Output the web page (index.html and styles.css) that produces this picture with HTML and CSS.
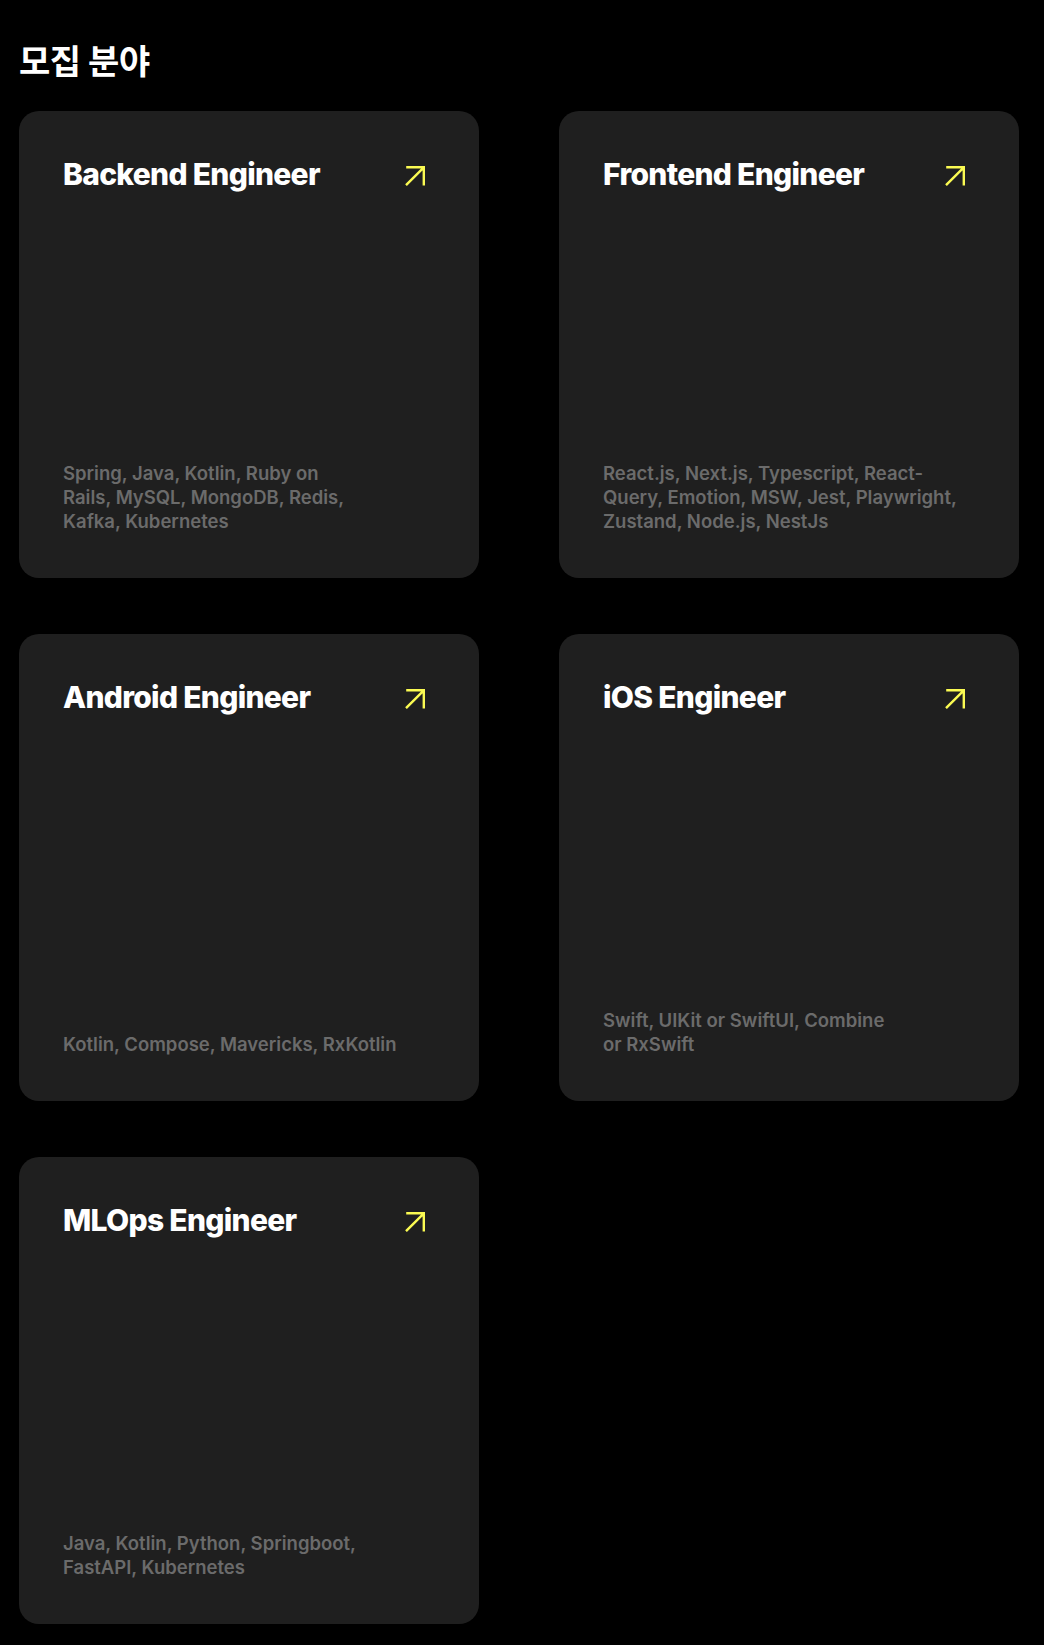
FILE: index.html
```html
<html>

<head>
    <link rel="stylesheet" href="styles.css">
</head>
<body>
    <section class="positions">
        <h2 class="positions-title">모집 분야</h2>
        <div class="position-grid">
            <a class="position-card" href="#">
                <div class="card-head">
                    <div class="card-title">Backend Engineer</div>
                    <svg class="card-arrow" width="20" height="20" viewBox="0 0 20 20">
                        <path d="M1 19.2 L18.6 1.6 M1.2 1.2 H18.8 V19.4" />
                    </svg>
                </div>
                <div class="card-stack">Spring, Java, Kotlin, Ruby on<br>Rails, MySQL, MongoDB, Redis,<br>Kafka, Kubernetes</div>
            </a>
            <a class="position-card" href="#">
                <div class="card-head">
                    <div class="card-title">Frontend Engineer</div>
                    <svg class="card-arrow" width="20" height="20" viewBox="0 0 20 20">
                        <path d="M1 19.2 L18.6 1.6 M1.2 1.2 H18.8 V19.4" />
                    </svg>
                </div>
                <div class="card-stack">React.js, Next.js, Typescript, React-<br>Query, Emotion, MSW, Jest, Playwright,<br>Zustand, Node.js, NestJs</div>
            </a>
            <a class="position-card" href="#">
                <div class="card-head">
                    <div class="card-title">Android Engineer</div>
                    <svg class="card-arrow" width="20" height="20" viewBox="0 0 20 20">
                        <path d="M1 19.2 L18.6 1.6 M1.2 1.2 H18.8 V19.4" />
                    </svg>
                </div>
                <div class="card-stack">Kotlin, Compose, Mavericks, RxKotlin</div>
            </a>
            <a class="position-card" href="#">
                <div class="card-head">
                    <div class="card-title">iOS Engineer</div>
                    <svg class="card-arrow" width="20" height="20" viewBox="0 0 20 20">
                        <path d="M1 19.2 L18.6 1.6 M1.2 1.2 H18.8 V19.4" />
                    </svg>
                </div>
                <div class="card-stack">Swift, UIKit or SwiftUI, Combine<br>or RxSwift</div>
            </a>
            <a class="position-card" href="#">
                <div class="card-head">
                    <div class="card-title">MLOps Engineer</div>
                    <svg class="card-arrow" width="20" height="20" viewBox="0 0 20 20">
                        <path d="M1 19.2 L18.6 1.6 M1.2 1.2 H18.8 V19.4" />
                    </svg>
                </div>
                <div class="card-stack">Java, Kotlin, Python, Springboot,<br>FastAPI, Kubernetes</div>
            </a>
        </div>
    </section>
</body>

</html>
```

FILE: styles.css
```css
body {
    margin: 0;
    background-color: #000;
    font-family: Inter, "Noto Sans CJK KR", sans-serif;
    color: #fff;
}

.positions {
    padding: 42px 25px 21px 19px;
}

.positions-title {
    margin: 0 0 29px 0;
    font-family: Inter, "Noto Sans CJK KR", sans-serif;
    font-size: 34px;
    line-height: 40px;
    font-weight: 700;
    letter-spacing: -0.5px;
}

.position-grid {
    display: grid;
    grid-template-columns: 460px 460px;
    column-gap: 80px;
    row-gap: 56px;
}

.position-card {
    display: flex;
    flex-direction: column;
    justify-content: space-between;
    height: 467px;
    box-sizing: border-box;
    padding: 45px 44px 45px 44px;
    background-color: #1f1f1f;
    border-radius: 20px;
    text-decoration: none;
    color: inherit;
}

.card-head {
    display: flex;
    justify-content: space-between;
    align-items: flex-start;
}

.card-title {
    font-size: 30px;
    line-height: 36px;
    font-weight: 800;
    letter-spacing: -0.7px;
    color: #fff;
}

.card-arrow {
    margin-top: 10px;
    margin-right: 10px;
    flex-shrink: 0;
}

.card-arrow path {
    fill: none;
    stroke: #fafa52;
    stroke-width: 2.4;
}

.card-stack {
    font-size: 18.5px;
    line-height: 24px;
    font-weight: 600;
    letter-spacing: 0;
    color: #6b6b6b;
}
```
